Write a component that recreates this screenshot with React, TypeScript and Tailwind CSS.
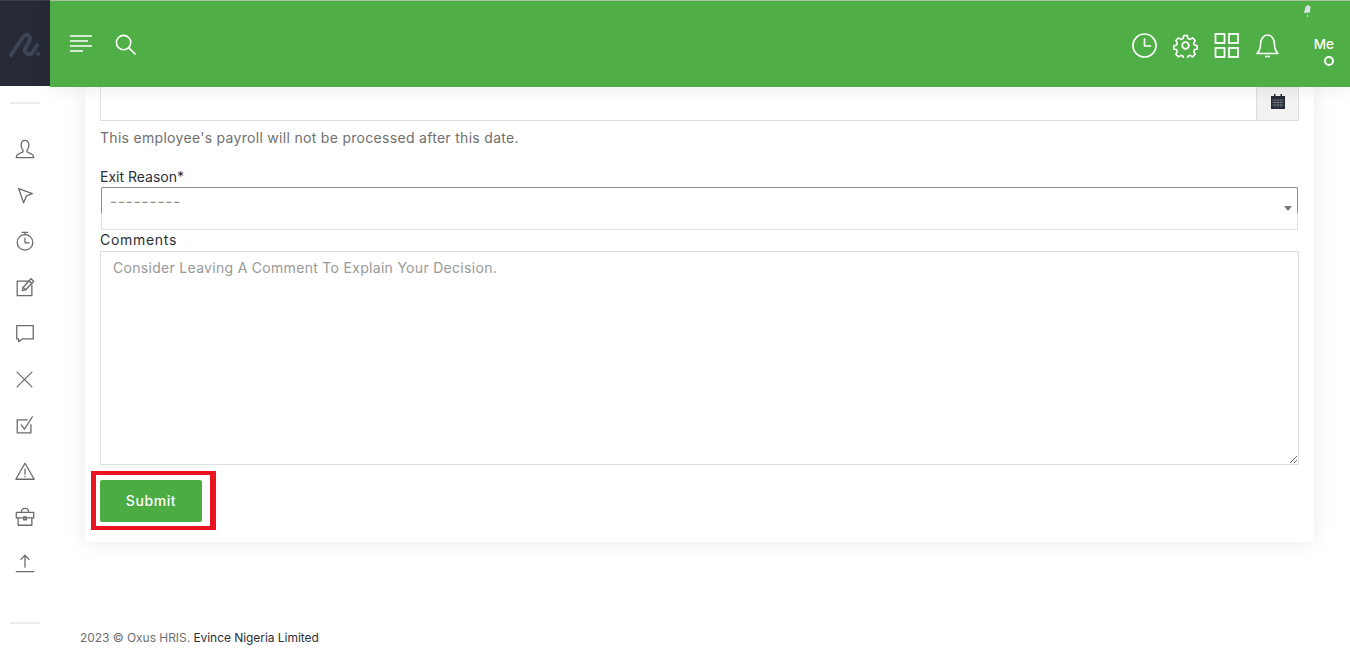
import type { ReactNode } from "react";

const font = { fontFamily: '"Inter", "Open Sans", sans-serif' };

function Ico({ children, size = 24 }: { children: ReactNode; size?: number }) {
  return (
    <svg width={size} height={size} viewBox="0 0 24 24" fill="none" stroke="currentColor" strokeWidth="1.4" strokeLinecap="round" strokeLinejoin="round">
      {children}
    </svg>
  );
}

const sideIcons: ReactNode[] = [
  <><path d="M2.500 21.500h19c0-3-1.500-4-4.500-5l-2.800-1.200v-2c1.300-1.200 2-3 2-5C16.200 4.800 14.500 2.500 12 2.500S7.800 4.800 7.800 8.300c0 2 .7 3.800 2 5v2L7 16.500c-3 1-4.500 2-4.500 5z" /></>,
  <><path d="M5 5l15 5.500-6.500 2.500-3 7.500z" /></>,
  <><circle cx="12" cy="13.500" r="8.500" /><path d="M12 5V2.500M9 2.500h6M12 9v5h4.500" /></>,
  <><path d="M15 5.500H3.500v16h16V10" /><path d="M9 16l1-3.500L18.500 3l3 2.700-8.700 9.300z" /><path d="M16.500 5.500l3 2.700M10 12.500l2.800 2.500" /></>,
  <><path d="M3 4h18v14.500H9L5 21.500v-3H3z" /></>,
  <><path d="M3.500 3.500l17 17M20.500 3.500l-17 17" /></>,
  <><path d="M18.500 11.500v9h-15v-14h11" /><path d="M8 12l3.500 4.500L20 3" /></>,
  <><path d="M12 3.500l10 17.500H2z" /><path d="M12 10v5.500M12 17.800v.4" /></>,
  <><rect x="2.500" y="7" width="19" height="6" /><path d="M4.500 13v8h15v-8M8 7c0-3 1.500-4.500 4-4.500S16 4 16 7M10.500 12h3v3h-3z" /></>,
  <><path d="M2.500 21.500h19M12 16.500V3.500M7.500 8L12 3.500 16.500 8" /></>,
];

function Sidebar() {
  return (
    <aside className="flex h-full w-[50px] shrink-0 flex-col items-center bg-white">
      <div className="flex h-[86px] w-full items-center justify-center border-t border-[#3a3f4a] bg-[#252a36]">
        <svg className="mt-[3px]" width="32" height="24" viewBox="0 0 32 24" fill="none" stroke="#3c4456" strokeWidth="4" strokeLinecap="round">
          <path d="M2 22 L14 4 C16 1 20 1 21 5 C21.500 8 18 12 16 16 C15 20 20 23 23 20 C25 18 26 15 28 12" />
          <circle cx="29" cy="21" r="2" fill="#3c4456" stroke="none" />
        </svg>
      </div>
      <div className="mt-[16px] h-[2px] w-[30px] bg-[#ececec]" />
      <div className="mt-[22px] flex flex-col items-center text-[#6a6a6a]">
        {sideIcons.map((icon, i) => (
          <div key={i} className="flex h-[46px] w-[50px] items-center justify-center pr-px">
            <Ico size={i === 5 ? 21 : 22}>{icon}</Ico>
          </div>
        ))}
      </div>
      <div className="mt-[36px] h-[2px] w-[30px] bg-[#ececec]" />
    </aside>
  );
}

function Header() {
  return (
    <header className="relative z-10 flex h-[87px] shrink-0 items-center justify-between border-t border-[#a9c2a0] bg-[#4fae46] pl-[20px] pr-[16px] text-white shadow-[0_2px_16px_rgba(0,0,0,0.08)]">
      <div className="flex items-center gap-[22px]">
        <svg width="23" height="18" viewBox="0 0 23 18" stroke="currentColor" strokeWidth="1.3">
          <path d="M0 1h22M0 6h18M0 11h22M0 16h13" />
        </svg>
        <svg width="21" height="21" viewBox="0 0 22 22" fill="none" stroke="currentColor" strokeWidth="1.7" strokeLinecap="round">
          <circle cx="9" cy="9" r="7.500" />
          <path d="M14.500 14.500L21 21" />
        </svg>
      </div>
      <div className="flex items-center">
        <div className="mt-[2px] flex items-center text-white">
          <svg className="mr-[16px]" width="25" height="25" viewBox="0 0 25 25" fill="none" stroke="currentColor" strokeWidth="1.7" strokeLinecap="round">
            <circle cx="12.500" cy="12.500" r="11.500" />
            <path d="M12.500 6v7h6" />
          </svg>
          <svg className="mr-[16px]" width="25" height="25" viewBox="0 0 24 24" fill="none" stroke="currentColor" strokeWidth="1.7" strokeLinejoin="round">
            <circle cx="12" cy="12" r="3.200" />
            <path d="M10 1.500h4l.6 3 2.200 1 2.700-1.600 2.800 2.800-1.600 2.700 1 2.200 2.800.6v3.600l-2.800.6-1 2.200 1.600 2.700-2.800 2.800-2.700-1.600-2.200 1-.6 2.800h-4l-.6-2.800-2.200-1-2.700 1.600-2.800-2.800 1.600-2.700-1-2.200-2.800-.6v-3.600l2.800-.6 1-2.200-1.600-2.700 2.800-2.800 2.700 1.600 2.200-1z" transform="translate(1.200 1.200) scale(0.9)" />
          </svg>
          <svg className="mr-[17px]" width="25" height="25" viewBox="0 0 25 25" fill="none" stroke="currentColor" strokeWidth="1.8">
            <rect x="1.500" y="1" width="9" height="9" />
            <rect x="15" y="1" width="9" height="9" />
            <rect x="1.500" y="15" width="9" height="9" />
            <rect x="15" y="15" width="9" height="9" />
          </svg>
          <svg width="23" height="25" viewBox="0 0 23 25" fill="none" stroke="currentColor" strokeWidth="1.6" strokeLinejoin="round">
            <path d="M1 20.500c2.500-2.500 3.500-4 3.500-9C4.500 6 7.500 2 11.500 2s7 4 7 9.500c0 5 1 6.500 3.500 9z" />
            <path d="M9 23.500h5" />
          </svg>
        </div>
        <div className="relative ml-[34px] flex w-[21px] flex-col items-end pt-[12px]">
          <svg className="absolute left-[-11px] top-[-19px]" width="10" height="14" viewBox="0 0 10 14">
            <path d="M2 9l1.500-6 2-2 3 1.500-.5 6z" fill="#d6e2e6" />
            <path d="M5 10.500l1 .5v2H5z" fill="#cfe0d0" />
          </svg>
          <span className="text-[13.500px] font-medium leading-[18px]">Me</span>
          <span className="mt-[3px] h-[10px] w-[10px] rounded-full border-2 border-white" />
        </div>
      </div>
    </header>
  );
}

function FormCard() {
  return (
    <section className="ml-[35px] w-[1229px] bg-white px-[15px] pb-[20px] shadow-[0_0_20px_rgba(0,0,0,0.09)]">
      <div className="flex h-[34px] border-x border-b border-[#dedede]">
        <div className="flex-1" />
        <div className="flex w-[42px] items-center justify-center border-l border-[#dedede] bg-[#f2f2f2] pb-[5px] text-[#252a36]">
          <svg width="14" height="15" viewBox="0 0 14 15" fill="currentColor">
            <path d="M3 0h1.500v2h5V0H11v2h3v13H0V2h3z" />
            <path d="M1 6h12M1 8.500h12M1 11h12M4 5.500v8M7 5.500v8M10 5.500v8" stroke="#9a9ca3" strokeWidth="0.5" />
          </svg>
        </div>
      </div>
      <p className="mt-[6px] text-[14px] leading-[21px] tracking-[0.3px] text-[#6f6f6f]">
        This employee's payroll will not be processed after this date.
      </p>
      <label className="mt-[18px] block text-[14px] leading-[21px] text-[#2c2f38]">Exit Reason*</label>
      <div className="mx-px h-[43px] border-x border-b border-[#e2e2e2]">
        <div className="relative -mx-px flex h-[26px] items-center rounded-t-[2px] border-x border-t border-[#8e8e8e] pl-[8px] pt-[3px] text-[15px] tracking-[1px] text-[#888]">
          ---------
          <span className="absolute right-[5px] top-[18px] h-0 w-0 border-x-[4px] border-t-[5px] border-x-transparent border-t-[#777]" />
        </div>
      </div>
      <label className="block pb-[1px] text-[14px] leading-[20px] tracking-[0.7px] text-[#2c2f38]">Comments</label>
      <textarea
        className="block h-[214px] w-full resize-y border border-[#dedede] px-[12px] py-[5px] text-[14px] leading-[21px] tracking-[0.3px] text-[#333] placeholder:text-[#999] focus:outline-none"
        placeholder="Consider Leaving A Comment To Explain Your Decision."
      />
      <div className="relative mt-[15px] w-[102px]">
        <button className="flex h-[42px] w-[102px] items-center justify-center rounded-[2px] bg-[#4cac44] pb-[2px] text-[14px] font-medium tracking-[0.6px] text-white">
          Submit
        </button>
        <span className="pointer-events-none absolute -bottom-[8px] -left-[9px] -right-[14px] -top-[9px] border-y-[4px] border-l-[5px] border-r-[6px] border-[#e8141f]" />
      </div>
    </section>
  );
}

export default function App() {
  return (
    <div className="flex h-[654px] w-[1350px] overflow-hidden bg-white" style={font}>
      <Sidebar />
      <div className="flex min-w-0 flex-1 flex-col">
        <Header />
        <main className="flex flex-1 flex-col">
          <FormCard />
          <footer className="mb-[6px] ml-[30px] mt-auto text-[12px] leading-[20px] tracking-[-0.05px] text-[#6f6f6f]">
            2023 © Oxus HRIS. <span className="text-[#2c2f38]">Evince Nigeria Limited</span>
          </footer>
        </main>
      </div>
    </div>
  );
}
